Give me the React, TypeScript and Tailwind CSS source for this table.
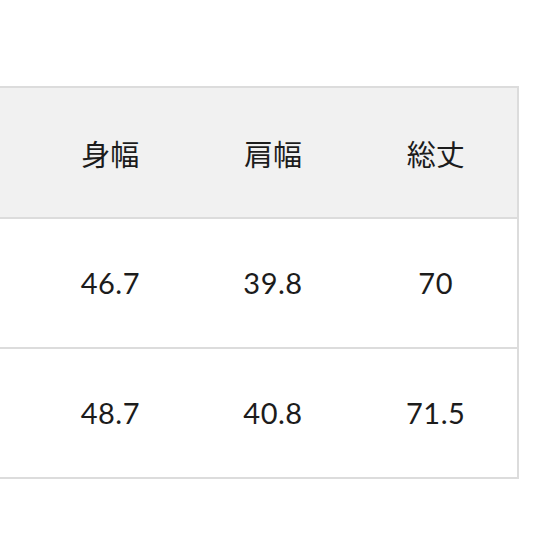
const headers = ['身幅', '肩幅', '総丈'];
const rows = [
  ['46.7', '39.8', '70'],
  ['48.7', '40.8', '71.5'],
];

export default function App() {
  return (
    <div className="w-[543px] h-[543px] bg-white pt-[86px]">
      <div className="w-[519px] border-t-2 border-r-2 border-[#dcdcdc] text-[#1c1c1c]">
        <div className="flex h-[131px] bg-[#f1f1f1] border-b-2 border-[#dcdcdc] items-center pl-[29px]">
          {headers.map((h) => (
            <div
              key={h}
              className="w-[163px] text-center text-[29px] pt-[2px] font-['Noto_Sans_CJK_JP',sans-serif]"
            >
              {h}
            </div>
          ))}
        </div>
        {rows.map((r, i) => (
          <div
            key={i}
            className="flex h-[130px] border-b-2 border-[#dcdcdc] items-center pl-[29px]"
          >
            {r.map((v, j) => (
              <div
                key={j}
                className="w-[163px] text-center text-[29px] tracking-[0.5px] font-['Lato',sans-serif]"
              >
                {v}
              </div>
            ))}
          </div>
        ))}
      </div>
    </div>
  );
}
